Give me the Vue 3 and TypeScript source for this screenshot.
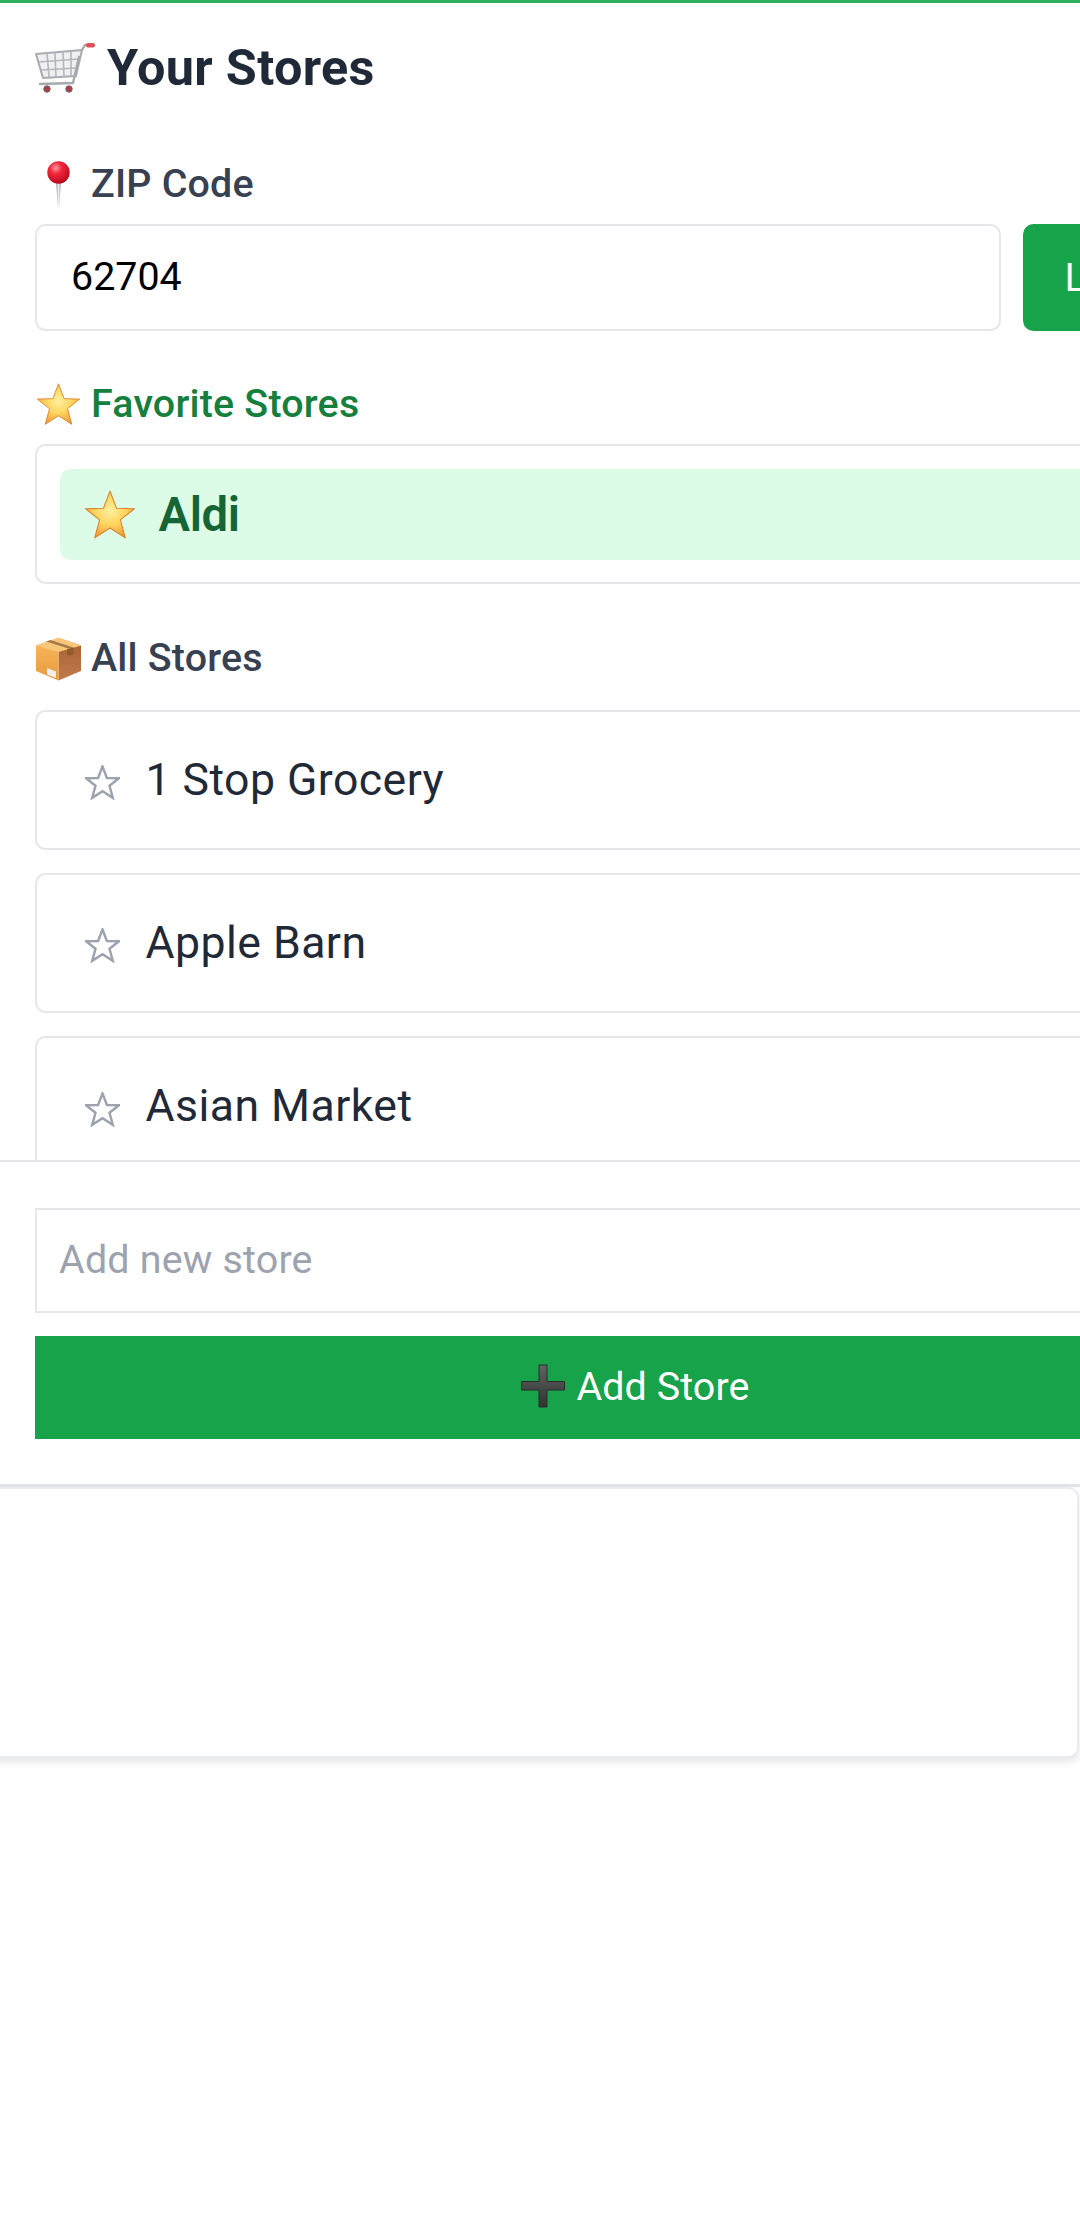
<script setup lang="ts">
const stores: string[] = ['1 Stop Grocery', 'Apple Barn', 'Asian Market', 'Costco']
const starPoints = '50,4 62.5,37 97,38 70,59.5 79.5,94 50,75 20.5,94 30,59.5 3,38 37.5,37'
</script>

<template>
  <div class="page">
    <div class="sheet">
      <main class="scroller">
        <header class="title-row">
          <svg class="cart" viewBox="0 0 60 50" aria-hidden="true">
            <path d="M1 11 L47 7 L41 33 L8 35 Z" fill="#eef0f2" stroke="#a9abb0" stroke-width="2" stroke-linejoin="round" />
            <path d="M4 19 L44 16 M6 27 L42 25 M12 10 L14 34 M20 10 L21 34 M28 9 L29 34 M36 8 L36 33" stroke="#b4b6bb" stroke-width="1.6" fill="none" />
            <path d="M47 7 L50 2 L54 2 M44 14 L38 40 L5 41" stroke="#a7a9ae" stroke-width="2.4" fill="none" stroke-linecap="round" stroke-linejoin="round" />
            <rect x="51" y="0" width="9" height="4.4" rx="2" fill="#e0525a" />
            <circle cx="12" cy="46" r="3.2" fill="#b23a48" stroke="#666" stroke-width="1" />
            <circle cx="34" cy="46" r="3.2" fill="#b23a48" stroke="#666" stroke-width="1" />
          </svg>
          <h1 class="title">Your Stores</h1>
        </header>

        <section class="zip">
          <div class="label">
            <span class="icon-slot">
              <svg class="pin" viewBox="0 0 23 46" aria-hidden="true">
                <defs>
                  <radialGradient id="pinBall" cx="0.38" cy="0.3" r="0.75">
                    <stop offset="0" stop-color="#ff9aa0" />
                    <stop offset="0.35" stop-color="#f3283c" />
                    <stop offset="1" stop-color="#b5051b" />
                  </radialGradient>
                  <linearGradient id="needle" x1="0" x2="1" y1="0" y2="0">
                    <stop offset="0" stop-color="#8c8f96" />
                    <stop offset="0.5" stop-color="#eceef1" />
                    <stop offset="1" stop-color="#8c8f96" />
                  </linearGradient>
                </defs>
                <path d="M9 20 H14 L12.2 45 Q11.5 46.4 10.8 45 Z" fill="url(#needle)" />
                <circle cx="11.5" cy="11.5" r="11.2" fill="url(#pinBall)" />
              </svg>
            </span>
            <span>ZIP Code</span>
          </div>
          <div class="zip-row">
            <input class="zip-input" type="text" value="62704" readonly />
            <button class="zip-btn" type="button">Lookup</button>
          </div>
        </section>

        <section class="block">
          <div class="label fav">
            <span class="icon-slot">
              <svg class="star-label" viewBox="0 0 100 100" aria-hidden="true">
                <defs>
                  <radialGradient id="starFill" cx="0.5" cy="0.42" r="0.6">
                    <stop offset="0" stop-color="#fff0a0" />
                    <stop offset="0.5" stop-color="#fed660" />
                    <stop offset="1" stop-color="#f29a34" />
                  </radialGradient>
                </defs>
                <polygon :points="starPoints" fill="url(#starFill)" stroke="#d9832c" stroke-width="2" stroke-linejoin="round" />
              </svg>
            </span>
            <span>Favorite Stores</span>
          </div>
          <div class="fav-card">
            <div class="fav-item">
              <svg class="star-item" viewBox="0 0 100 100" aria-hidden="true">
                <polygon :points="starPoints" fill="url(#starFill)" stroke="#d9832c" stroke-width="2" stroke-linejoin="round" />
              </svg>
              <span class="fav-name">Aldi</span>
            </div>
          </div>
        </section>

        <section class="block">
          <div class="label">
            <span class="icon-slot">
              <svg class="box" viewBox="0 0 47 44" aria-hidden="true">
                <defs>
                  <linearGradient id="boxRight" x1="0" x2="0" y1="0" y2="1">
                    <stop offset="0" stop-color="#a5602f" />
                    <stop offset="1" stop-color="#c27a4c" />
                  </linearGradient>
                  <linearGradient id="boxLeft" x1="0" x2="0" y1="0" y2="1">
                    <stop offset="0" stop-color="#f9b95c" />
                    <stop offset="1" stop-color="#e89a3e" />
                  </linearGradient>
                </defs>
                <path d="M23.5 1 L46 8.5 L46 34 L23.5 43.5 Z" fill="url(#boxRight)" />
                <path d="M23.5 1 L1 8.5 L1 34 L23.5 43.5 Z" fill="url(#boxLeft)" />
                <path d="M23.5 0.5 L46.5 8.5 L23.5 15 L0.5 8.5 Z" fill="#f9c779" />
                <path d="M11 4.4 L34 11.7 L38.5 10.4 L15.5 3 Z" fill="#a87a48" />
                <path d="M32 12.3 L38.5 10.4 V17 L35 18.8 L32 17.5 Z" fill="#8f5a2c" />
                <path d="M12 31 L21 34.5 V41 L12 37.5 Z" fill="#f1eef0" />
              </svg>
            </span>
            <span>All Stores</span>
          </div>
          <ul class="store-list">
            <li v-for="store in stores" :key="store" class="store-row">
              <svg class="star-outline" viewBox="0 0 100 100" aria-hidden="true">
                <polygon :points="starPoints" fill="none" stroke="#9ca3af" stroke-width="7" stroke-linejoin="miter" />
              </svg>
              <span class="store-name">{{ store }}</span>
            </li>
          </ul>
        </section>
      </main>

      <footer class="footer">
        <input class="new-input" type="text" placeholder="Add new store" readonly />
        <button class="add-btn" type="button">
          <svg class="plus" viewBox="0 0 44 44" aria-hidden="true">
            <defs>
              <linearGradient id="plusFill" x1="0" x2="0" y1="0" y2="1">
                <stop offset="0" stop-color="#5f6361" />
                <stop offset="1" stop-color="#2f3231" />
              </linearGradient>
            </defs>
            <path d="M18 1 H26 V17.5 H43.5 V26 H26 V43 H18 V26 H0.5 V17.5 H18 Z" fill="url(#plusFill)" stroke="#2a2c2b" stroke-width="1" stroke-linejoin="round" />
          </svg>
          <span>Add Store</span>
        </button>
      </footer>

      <div class="empty-card"></div>
    </div>
  </div>
</template>

<style scoped>
.page {
  width: 1080px;
  height: 2213px;
  overflow: hidden;
  background: #ffffff;
  font-family: Roboto, "Noto Sans", sans-serif;
}

.sheet {
  width: 1271px;
  border-top: 3px solid #2fb05f;
}

.scroller {
  box-sizing: border-box;
  height: 1159px;
  overflow: hidden;
  padding: 35.4px 35px 0;
  border-bottom: 2.6px solid #e5e7eb;
}

.title-row {
  display: flex;
  align-items: center;
  gap: 12px;
  height: 60px;
}

.cart {
  width: 60px;
  height: 50px;
  flex: none;
}

.title {
  margin: 0;
  font-size: 50.4px;
  letter-spacing: 0.32px;
  line-height: 60px;
  font-weight: 700;
  color: #1f2937;
}

.zip {
  margin-top: 59.4px;
}

.block {
  margin-top: 47.4px;
}

.label {
  display: flex;
  align-items: center;
  gap: 9px;
  height: 52px;
  margin-bottom: 14px;
  font-size: 39.4px;
  letter-spacing: 0.2px;
  line-height: 52px;
  font-weight: 490;
  color: #374151;
}

.fav {
  color: #15803d;
}

.icon-slot {
  display: flex;
  justify-content: center;
  width: 47px;
  flex: none;
}

.pin {
  width: 23px;
  height: 46px;
}

.star-label {
  width: 45px;
  height: 45px;
}

.box {
  width: 47px;
  height: 44px;
  margin-top: 2px;
}

.zip-row {
  display: flex;
  gap: 22px;
}

.zip-input {
  box-sizing: border-box;
  flex: 1;
  min-width: 0;
  height: 107px;
  padding: 0 32px 2px 34px;
  border: 2.625px solid #e5e7eb;
  border-radius: 10.5px;
  outline: none;
  background: #ffffff;
  font-family: inherit;
  font-size: 39.4px;
  color: #000000;
}

.zip-btn {
  flex: none;
  width: 213px;
  height: 107px;
  padding: 0;
  border: none;
  border-radius: 10.5px;
  background: #16a34a;
  font-family: inherit;
  font-size: 39.4px;
  color: #ffffff;
}

.fav-card {
  box-sizing: border-box;
  height: 140px;
  padding: 23px 22.5px 21px;
  border: 2.625px solid #e5e7eb;
  border-radius: 10.5px;
}

.fav-item {
  display: flex;
  align-items: center;
  gap: 23px;
  height: 91px;
  padding-left: 24px;
  border-radius: 10.5px;
  background: #dcfce7;
}

.star-item {
  width: 52px;
  height: 52px;
  flex: none;
}

.fav-name {
  font-size: 47.25px;
  font-weight: 570;
  letter-spacing: -0.4px;
  color: #166534;
}

.store-list {
  display: flex;
  flex-direction: column;
  gap: 23.3px;
  margin: 26.1px 0 0;
  padding: 0;
  list-style: none;
}

.store-row {
  box-sizing: border-box;
  display: flex;
  align-items: center;
  gap: 26px;
  height: 140px;
  padding-left: 47.5px;
  border: 2.625px solid #e5e7eb;
  border-radius: 10.5px;
}

.star-outline {
  width: 35px;
  height: 35px;
  flex: none;
  margin-top: 6px;
}

.store-name {
  font-size: 44.6px;
  letter-spacing: 0.45px;
  line-height: 60px;
  color: #1f2937;
}

.footer {
  display: flex;
  flex-direction: column;
  gap: 23px;
  padding: 46px 35px 45px;
  border-bottom: 3px solid #e3e4e8;
}

.new-input {
  box-sizing: border-box;
  width: 100%;
  height: 105px;
  padding: 0 22px 3px;
  border: 2.625px solid #e5e7eb;
  border-radius: 0;
  outline: none;
  background: #ffffff;
  font-family: inherit;
  font-size: 39.4px;
  letter-spacing: 0.2px;
  color: #1f2937;
}

.new-input::placeholder {
  color: #9ca3af;
  opacity: 1;
}

.add-btn {
  display: flex;
  align-items: center;
  justify-content: center;
  gap: 11px;
  width: 100%;
  height: 103px;
  padding: 0 0 3px;
  border: none;
  border-radius: 0;
  background: #16a34a;
  font-family: inherit;
  font-size: 39.4px;
  letter-spacing: 0.1px;
  color: #ffffff;
}

.plus {
  width: 44px;
  height: 44px;
  flex: none;
}

.empty-card {
  box-sizing: border-box;
  width: 1099px;
  height: 271px;
  margin-left: -20px;
  border: 2.625px solid #ebecef;
  border-radius: 10.5px;
  background: #ffffff;
  box-shadow: 0 4px 8px rgba(0, 0, 0, 0.1);
}
</style>
